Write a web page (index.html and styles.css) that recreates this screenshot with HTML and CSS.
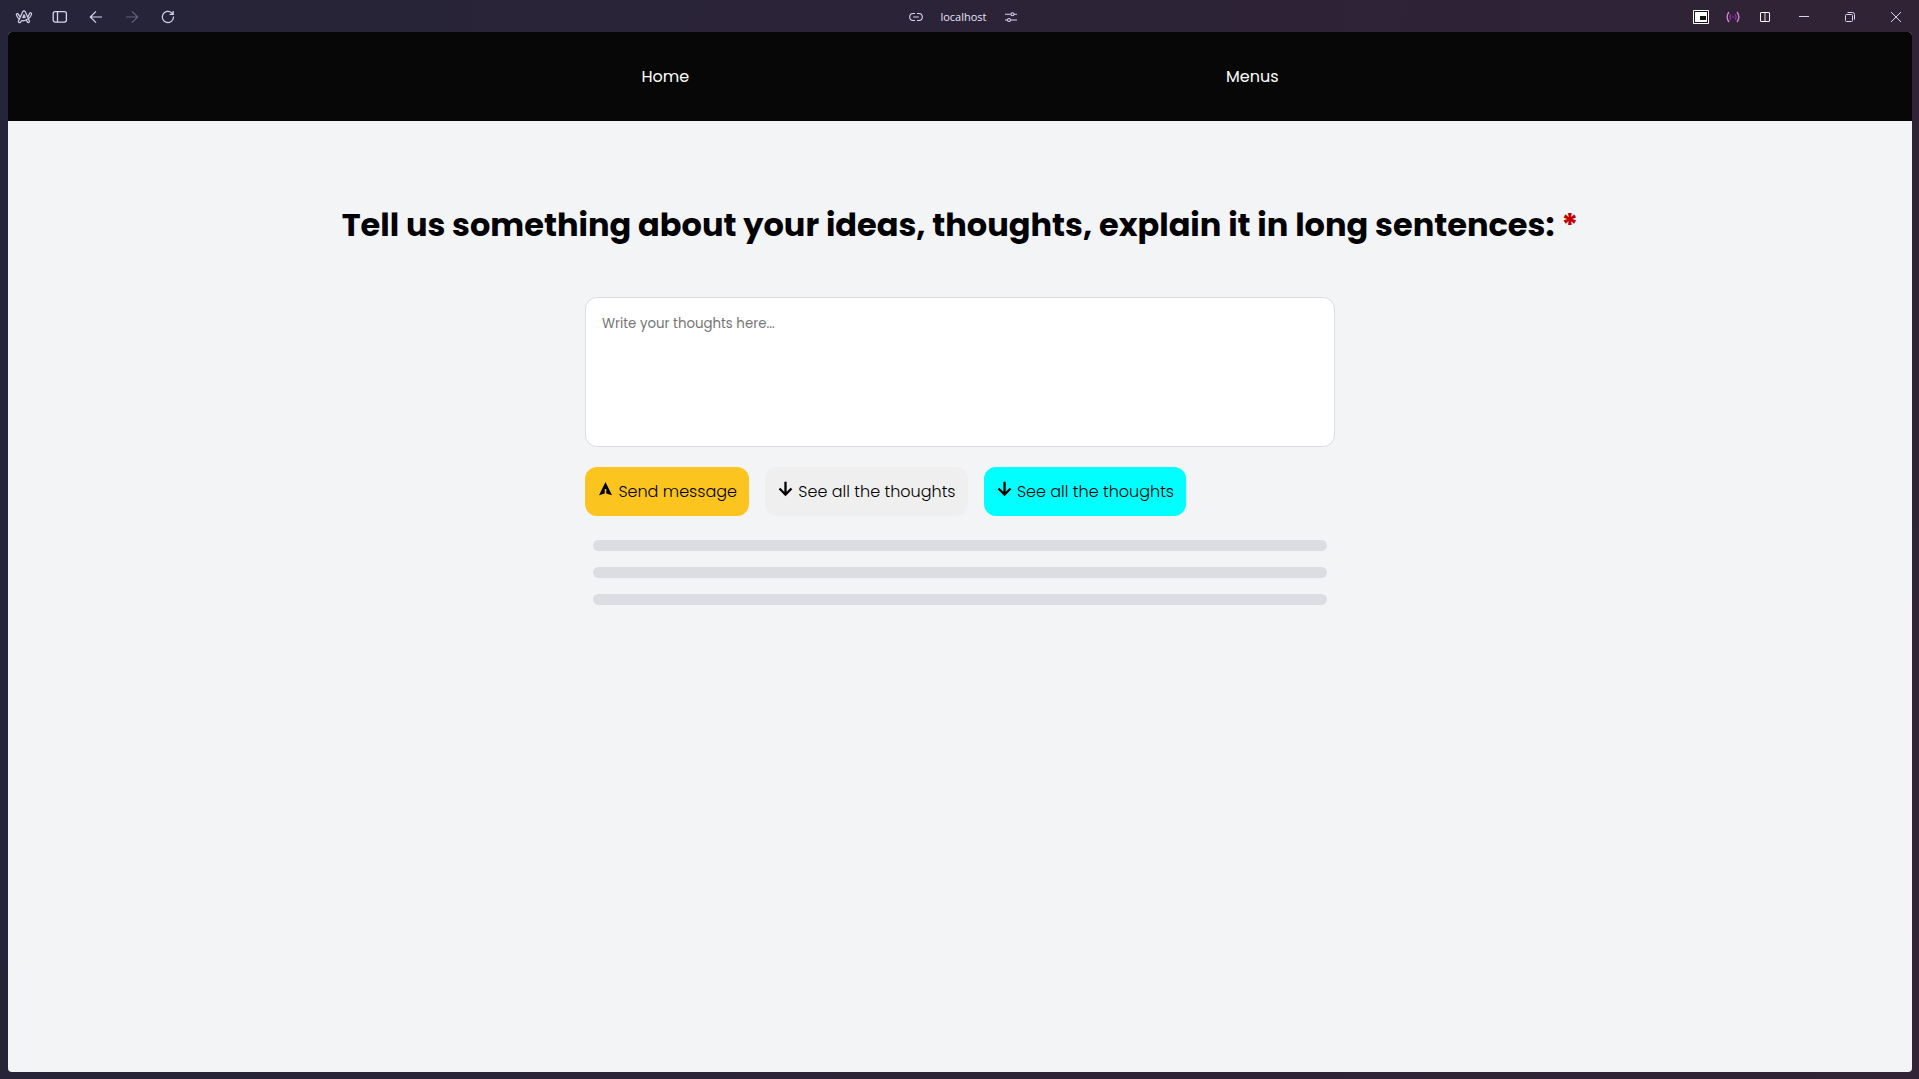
FILE: index.html
```html
<!DOCTYPE html>
<html lang="en">
<head>
<meta charset="utf-8">
<meta name="viewport" content="width=device-width, initial-scale=1">
<title>Thoughts</title>
<link rel="stylesheet" href="styles.css">
</head>
<body>
<header class="toolbar">
  <div class="toolbar-group toolbar-start">
    <button class="tool" aria-label="Browser menu"><svg width="18" height="16" viewBox="0 0 18 16" stroke-width="1.2" stroke-linejoin="round"><path d="M3.200 12.800 7.600 3Q9 .6 10.400 3L14.600 12.400Q13.800 14.400 12.300 13L11.200 10.800M6.500 11.400 5.600 13.200Q4.200 14.400 3.200 12.800M7.800 8.400 9 5.800 10.200 8.200Q9 8.800 7.800 8.400ZM5.400 8Q4 6.800 3.400 5.200 2.200 3.800 1.300 5.400 2 8.200 4.200 10.300M6.500 11.400Q9 12.400 11.200 10.800 15.400 9.200 16.600 4.800 16 3 14.600 4.200 14 6.600 12.600 7.800"/></svg></button>
    <button class="tool" aria-label="Toggle sidebar"><svg width="16" height="14" viewBox="0 0 16 14" stroke-width="1.3"><rect x="1.200" y="1.700" width="13.200" height="10.400" rx="2"/><path d="M5.500 2v10"/></svg></button>
    <button class="tool" aria-label="Back"><svg width="14" height="14" viewBox="0 0 14 14" stroke-width="1.2"><path d="M13 7H1.300M7 1.300 1.300 7 7 12.700"/></svg></button>
    <button class="tool tool-dim" aria-label="Forward"><svg width="14" height="14" viewBox="0 0 14 14" stroke-width="1.2"><path d="M1 7h11.700M7 1.300 12.700 7 7 12.700"/></svg></button>
    <button class="tool" aria-label="Reload"><svg width="14" height="14" viewBox="0 0 14 14" stroke-width="1.2"><path d="M12.500 6.500A5.600 5.600 0 1 1 10.600 2.700L12 4.200M12.200 1v3.400H8.600"/></svg></button>
  </div>
  <div class="toolbar-group address">
    <button class="tool tool-small" aria-label="Copy link"><svg width="14" height="10" viewBox="0 0 14 10" stroke-width="1.1"><path d="M6 1.500H4.200a3.400 3.400 0 0 0 0 7H6M8 1.500h1.800a3.400 3.400 0 0 1 0 7H8M4.200 5h5.600"/></svg></button>
    <span class="host">localhost</span>
    <button class="tool tool-small" aria-label="Site settings"><svg width="14" height="12" viewBox="0 0 14 12" stroke-width="1.1"><path d="M1 3.200h6M10 3.200h3M1 9h2.500M6.500 9H13"/><circle cx="8.500" cy="3.200" r="1.500"/><circle cx="5" cy="9" r="1.500"/></svg></button>
  </div>
  <div class="toolbar-group toolbar-end">
    <button class="tool tool-small" aria-label="Picture in picture"><svg width="16" height="14" viewBox="0 0 16 14" stroke="none"><rect class="pip-light" width="16" height="14" rx="1"/><path class="pip-dark" d="M1 1h14v12H1Z"/><path class="pip-light" d="M2 2h12v10H2Z"/><path class="pip-dark" d="M7 6h6v4H7Z"/></svg></button>
    <button class="tool tool-small" aria-label="Live preview"><svg width="14" height="12" viewBox="0 0 14 12" stroke-width="1.3"><path class="signal-outer" d="M3 1Q-.8 6 3 11M11 1q3.800 5 0 10"/><path class="signal-inner" d="M4.800 3.400Q3 6 4.800 8.600M9.200 3.400q1.800 2.600 0 5.200M6.300 6h1.400"/></svg></button>
    <button class="tool tool-small" aria-label="Split view"><svg width="12" height="12" viewBox="0 0 12 12"><rect class="split-frame" x="1.500" y="1.500" width="9" height="9" rx=".5"/><path class="split-line" d="M6 2v8"/></svg></button>
    <button class="tool tool-window" aria-label="Minimize"><svg width="10" height="10" viewBox="0 0 10 10"><path d="M0 4.500h10"/></svg></button>
    <button class="tool tool-window" aria-label="Restore"><svg width="10" height="10" viewBox="0 0 10 10"><rect x=".5" y="2.500" width="7" height="7" rx="1"/><path d="M2.500.5H7.500Q9.500.5 9.500 2.500v5"/></svg></button>
    <button class="tool tool-window" aria-label="Close"><svg width="10" height="10" viewBox="0 0 10 10"><path d="m0 0 10 10M10 0 0 10"/></svg></button>
  </div>
</header>
<div class="page">
  <nav class="nav">
    <ul class="nav-list">
      <li><a href="#home">Home</a></li>
      <li><a href="#menus">Menus</a></li>
    </ul>
  </nav>
  <main class="main">
    <h1 class="title"><label for="thoughts">Tell us something about your ideas, thoughts, explain it in long sentences: <span class="required">*</span></label></h1>
    <form class="form">
      <textarea class="thoughts" id="thoughts" placeholder="Write your thoughts here..." required></textarea>
      <div class="actions">
        <button class="btn btn-send" type="submit"><svg class="icon icon-solid" width="17" height="16" viewBox="0 0 17 16"><path d="M8.500 1 15 14.200 9.300 12.400V8H7.700v4.400L2 14.200Z"/></svg> Send message</button>
        <button class="btn" type="button"><svg class="icon" width="17" height="16" viewBox="0 0 17 16"><path d="M8.500.8v12.500M2.500 7.500l6 6 6-6"/></svg> See all the thoughts</button>
        <button class="btn btn-cyan" type="button"><svg class="icon" width="17" height="16" viewBox="0 0 17 16"><path d="M8.500.8v12.500M2.500 7.500l6 6 6-6"/></svg> See all the thoughts</button>
      </div>
      <div class="skeleton" aria-hidden="true">
        <div class="bar"></div>
        <div class="bar"></div>
        <div class="bar"></div>
      </div>
    </form>
  </main>
</div>
</body>
</html>
```
FILE: styles.css
```css
* { box-sizing: border-box; }

body {
  margin: 0;
  min-height: 100vh;
  display: flex;
  flex-direction: column;
  font-family: Poppins, Inter, sans-serif;
  background: linear-gradient(100deg, #252438, #2c2337 50%, #322336);
}

svg { fill: none; stroke: currentColor; }

.toolbar {
  display: grid;
  grid-template-columns: 1fr auto 1fr;
  height: 32px;
  padding-top: 1px;
  color: #d8d4f0;
}

.toolbar-group { display: flex; align-items: center; }
.toolbar-start { padding-left: 6px; }
.toolbar-end { justify-content: flex-end; }
.address { padding-left: 8px; }

.tool {
  display: flex;
  align-items: center;
  justify-content: center;
  width: 36px;
  height: 31px;
  padding: 0;
  border: 0;
  background: none;
  color: inherit;
}
.tool-dim { color: #656078; }
.tool-small { width: 32px; }
.tool-window { width: 46px; }

.pip-light { fill: #fff; stroke: none; }
.pip-dark { fill: #17131a; stroke: none; }
.signal-outer { stroke: #c78ad0; }
.signal-inner { stroke: #9a28ae; }
.split-frame { stroke: #fff; }
.split-line { stroke: #8b808f; stroke-width: 2; }

.host {
  padding: 0 8px;
  font: 11px/16px "Open Sans", sans-serif;
  color: #e8e4fa;
}

.page {
  flex: 1;
  margin: 0 7px 7px 8px;
  border-radius: 4px;
  overflow: hidden;
  background: #f2f4f6;
}

.nav { padding: 32px 16px; background: #070707; }
.nav-list {
  display: flex;
  justify-content: space-around;
  max-width: 1174px;
  margin: 0 auto;
  padding: 0;
  list-style: none;
  font-size: 16px;
  line-height: 25px;
}
.nav a { color: #fff; text-decoration: none; }

.main { padding: 80px 16px; }

.title {
  margin: 0 0 48px;
  text-align: center;
  font-size: 32px;
  line-height: 48px;
  font-weight: 700;
  color: #000;
}
.required { color: #c00000; }

.form { max-width: 750px; margin: 0 auto; }

.thoughts {
  display: block;
  width: 100%;
  height: 150px;
  padding: 16px;
  border: 1px solid #dcdde3;
  border-radius: 12px;
  background: #fff;
  font-family: inherit;
  line-height: 20px;
  resize: none;
}
.thoughts::placeholder { color: #757575; }

.actions { display: flex; flex-wrap: wrap; gap: 16px; margin-top: 20px; }

.btn {
  padding: 12px;
  border: 0;
  border-radius: 12px;
  background: #efefef;
  color: #000;
  font-family: inherit;
  font-size: 16px;
  font-weight: 300;
  line-height: 25px;
}
.btn-send { background: #fcc41f; }
.btn-cyan { background: #0ff; }
.icon { vertical-align: baseline; stroke-width: 2.3; }
.icon-solid { fill: currentColor; stroke: none; }

.skeleton {
  display: flex;
  flex-direction: column;
  gap: 16px;
  padding: 24px 8px;
}
.bar { height: 11px; border-radius: 6px; background: #dcdde3; }
```
